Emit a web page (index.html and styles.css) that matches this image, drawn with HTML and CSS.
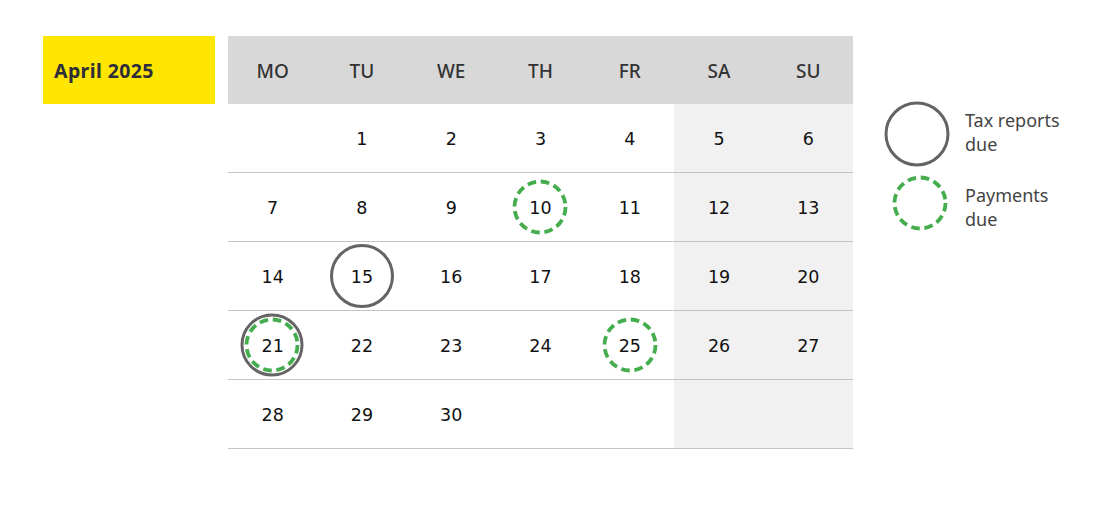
FILE: index.html
```html
<!DOCTYPE html>
<html lang="en">
<head>
<meta charset="utf-8">
<title>April 2025</title>
<link rel="stylesheet" href="styles.css">
</head>
<body>
<div class="page">
  <div class="month">April 2025</div>
  <div class="calendar">
    <div class="head">MO</div><div class="head">TU</div><div class="head">WE</div><div class="head">TH</div><div class="head">FR</div><div class="head">SA</div><div class="head">SU</div>

    <div class="day"></div>
    <div class="day">1</div>
    <div class="day">2</div>
    <div class="day">3</div>
    <div class="day">4</div>
    <div class="day we">5</div>
    <div class="day we">6</div>

    <div class="day">7</div>
    <div class="day">8</div>
    <div class="day">9</div>
    <div class="day"><svg class="mark" viewBox="0 0 70 70"><circle class="pay" cx="35" cy="35" r="25.5"/></svg><span>10</span></div>
    <div class="day">11</div>
    <div class="day we">12</div>
    <div class="day we">13</div>

    <div class="day">14</div>
    <div class="day"><svg class="mark" viewBox="0 0 70 70"><circle class="tax" cx="35" cy="35" r="30.5"/></svg><span>15</span></div>
    <div class="day">16</div>
    <div class="day">17</div>
    <div class="day">18</div>
    <div class="day we">19</div>
    <div class="day we">20</div>

    <div class="day"><svg class="mark m21" viewBox="0 0 70 70"><circle class="tax" cx="35" cy="35" r="30"/><circle class="pay" cx="35" cy="35" r="25.5"/></svg><span>21</span></div>
    <div class="day">22</div>
    <div class="day">23</div>
    <div class="day">24</div>
    <div class="day"><svg class="mark" viewBox="0 0 70 70"><circle class="pay" cx="35" cy="35" r="25.5"/></svg><span>25</span></div>
    <div class="day we">26</div>
    <div class="day we">27</div>

    <div class="day">28</div>
    <div class="day">29</div>
    <div class="day">30</div>
    <div class="day"></div>
    <div class="day"></div>
    <div class="day we"></div>
    <div class="day we"></div>
  </div>
  <div class="legend">
    <div class="item item1">
      <svg class="icon" viewBox="0 0 70 70"><circle class="tax" cx="35" cy="35" r="31"/></svg>
      <div class="label">Tax reports<br>due</div>
    </div>
    <div class="item item2">
      <svg class="icon" viewBox="0 0 70 70"><circle class="pay" cx="35" cy="35" r="25.5"/></svg>
      <div class="label">Payments<br>due</div>
    </div>
  </div>
</div>
</body>
</html>
```

FILE: styles.css
```css
html, body {
  margin: 0;
  padding: 0;
  background: #fff;
}
.page {
  display: flex;
  align-items: flex-start;
  padding: 36px 0 0 43px;
}
.month {
  width: 172px;
  height: 68px;
  box-sizing: border-box;
  background: #ffe600;
  color: #2e2e38;
  font-family: "Noto Sans", "Open Sans", sans-serif;
  font-weight: 700;
  font-size: 19.5px;
  letter-spacing: 0.4px;
  display: flex;
  align-items: center;
  padding-left: 11px;
}
.calendar {
  margin-left: 13px;
  width: 625px;
  display: grid;
  grid-template-columns: repeat(7, 1fr);
  grid-template-rows: 68px repeat(5, 69px);
}
.head {
  background: #d8d8d8;
  color: #333;
  font-family: "Noto Sans", "Open Sans", sans-serif;
  font-weight: 500;
  font-size: 19px;
  display: flex;
  align-items: center;
  justify-content: center;
  padding-top: 1px;
}
.day {
  position: relative;
  border-bottom: 1px solid #c4c4c4;
  display: flex;
  align-items: center;
  justify-content: center;
  padding-top: 2px;
  font-family: "DejaVu Sans", Verdana, sans-serif;
  font-size: 17.5px;
  color: #111;
}
.day.we {
  background: #f1f1f1;
}
.day span {
  position: relative;
}
.mark {
  position: absolute;
  left: 50%;
  top: 50%;
  width: 70px;
  height: 70px;
  margin: -35px 0 0 -35px;
}
.m21 {
  margin-left: -36px;
}
.tax {
  fill: none;
  stroke: #646464;
  stroke-width: 3;
}
.pay {
  fill: none;
  stroke: #45ad4e;
  stroke-width: 3.8;
  stroke-dasharray: 8.6 4.75;
}
.legend {
  margin-left: 29px;
  margin-top: 63px;
  display: flex;
  flex-direction: column;
}
.item {
  display: flex;
  align-items: center;
  gap: 13px;
}
.icon {
  width: 70px;
  height: 70px;
  flex: none;
}
.item1 .label {
  margin-bottom: 4px;
}
.item2 {
  margin-top: -1px;
  gap: 10px;
}
.item2 .icon {
  margin-left: 3px;
}
.item2 .label {
  margin-top: 8px;
}
.label {
  font-family: "Noto Sans", "Open Sans", sans-serif;
  font-size: 18px;
  line-height: 24px;
  color: #444;
}
```
